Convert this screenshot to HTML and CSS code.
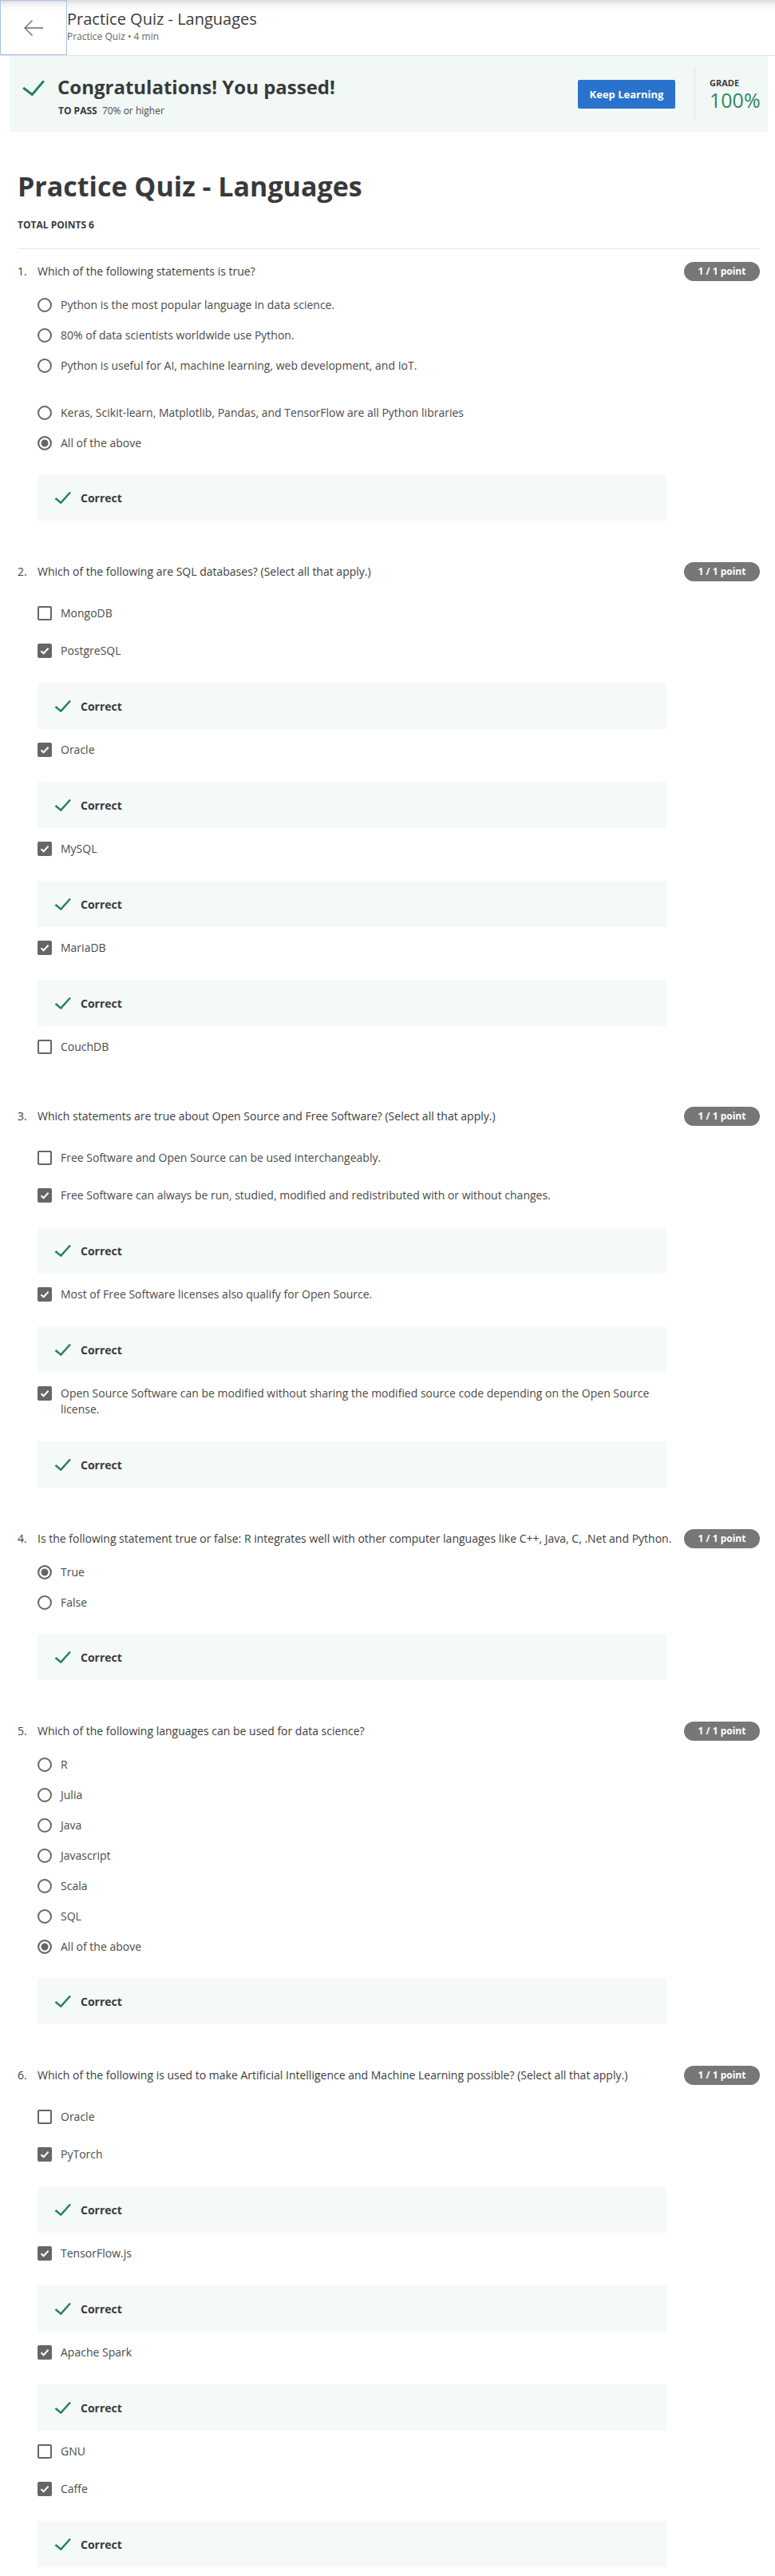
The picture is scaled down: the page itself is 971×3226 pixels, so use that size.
FILE: index.html
```html
<!DOCTYPE html>
<html lang="en">
<head>
<meta charset="utf-8">
<title>Practice Quiz - Languages</title>
<link rel="stylesheet" href="styles.css">
</head>
<body>
<svg class="defs" width="0" height="0" aria-hidden="true">
  <symbol id="ok" viewBox="0 0 21 16"><path d="M1.5 9 L8.3 14.6 L20 1.5" fill="none" stroke="#1f8354" stroke-width="2.4"/></symbol>
  <symbol id="tick" viewBox="0 0 14 14"><path d="M2.5 7.2 L5.6 10.2 L11.6 3.8" fill="none" stroke="#fff" stroke-width="2"/></symbol>
</svg>

<header class="topbar">
  <button class="back" aria-label="Back">
    <svg width="26" height="22" viewBox="0 0 26 22"><path d="M25 11H2 M11.5 1.5 L2 11 L11.5 20.5" fill="none" stroke="#6b6b6b" stroke-width="1.4"/></svg>
  </button>
  <div class="topbar-text">
    <div class="topbar-title">Practice Quiz - Languages</div>
    <div class="topbar-sub">Practice Quiz • 4 min</div>
  </div>
</header>

<section class="banner">
  <div class="banner-main">
    <svg class="banner-icon" width="28" height="20" viewBox="0 0 28 20"><path d="M1.2 10 L12.3 18.4 L26.8 1.4" fill="none" stroke="#1f8354" stroke-width="3"/></svg>
    <div>
      <div class="banner-title">Congratulations! You passed!</div>
      <div class="banner-sub"><b>TO PASS</b>&nbsp; 70% or higher</div>
    </div>
  </div>
  <div class="banner-actions">
    <button class="btn">Keep Learning</button>
    <div class="vdiv"></div>
    <div class="grade">
      <div class="grade-label">GRADE</div>
      <div class="grade-value">100%</div>
    </div>
  </div>
</section>

<main class="quiz">
  <h1>Practice Quiz - Languages</h1>
  <div class="total">TOTAL POINTS 6</div>

  <div class="q q-first">
    <div class="q-head"><span class="q-num">1.</span><span class="q-text">Which of the following statements is true?</span><span class="badge">1 / 1 point</span></div>
    <div class="options radios">
      <div class="opt"><span class="mark rmark"></span><span>Python is the most popular language in data science.</span></div>
      <div class="opt"><span class="mark rmark"></span><span>80% of data scientists worldwide use Python.</span></div>
      <div class="opt spaced"><span class="mark rmark"></span><span>Python is useful for AI, machine learning, web development, and IoT.</span></div>
      <div class="opt"><span class="mark rmark"></span><span>Keras, Scikit-learn, Matplotlib, Pandas, and TensorFlow are all Python libraries</span></div>
      <div class="opt"><span class="mark rmark on"></span><span>All of the above</span></div>
      <div class="feedback"><svg class="fb-icon"><use href="#ok"/></svg><span>Correct</span></div>
    </div>
  </div>

  <div class="q">
    <div class="q-head"><span class="q-num">2.</span><span class="q-text">Which of the following are SQL databases? (Select all that apply.)</span><span class="badge">1 / 1 point</span></div>
    <div class="options checks">
      <div class="opt"><span class="mark cmark"></span><span>MongoDB</span></div>
      <div class="opt"><span class="mark cmark on"><svg><use href="#tick"/></svg></span><span>PostgreSQL</span></div>
      <div class="feedback"><svg class="fb-icon"><use href="#ok"/></svg><span>Correct</span></div>
      <div class="opt"><span class="mark cmark on"><svg><use href="#tick"/></svg></span><span>Oracle</span></div>
      <div class="feedback"><svg class="fb-icon"><use href="#ok"/></svg><span>Correct</span></div>
      <div class="opt"><span class="mark cmark on"><svg><use href="#tick"/></svg></span><span>MySQL</span></div>
      <div class="feedback"><svg class="fb-icon"><use href="#ok"/></svg><span>Correct</span></div>
      <div class="opt"><span class="mark cmark on"><svg><use href="#tick"/></svg></span><span>MariaDB</span></div>
      <div class="feedback"><svg class="fb-icon"><use href="#ok"/></svg><span>Correct</span></div>
      <div class="opt"><span class="mark cmark"></span><span>CouchDB</span></div>
    </div>
  </div>

  <div class="q">
    <div class="q-head"><span class="q-num">3.</span><span class="q-text">Which statements are true about Open Source and Free Software? (Select all that apply.)</span><span class="badge">1 / 1 point</span></div>
    <div class="options checks">
      <div class="opt"><span class="mark cmark"></span><span>Free Software and Open Source can be used interchangeably.</span></div>
      <div class="opt"><span class="mark cmark on"><svg><use href="#tick"/></svg></span><span>Free Software can always be run, studied, modified and redistributed with or without changes.</span></div>
      <div class="feedback"><svg class="fb-icon"><use href="#ok"/></svg><span>Correct</span></div>
      <div class="opt"><span class="mark cmark on"><svg><use href="#tick"/></svg></span><span>Most of Free Software licenses also qualify for Open Source.</span></div>
      <div class="feedback"><svg class="fb-icon"><use href="#ok"/></svg><span>Correct</span></div>
      <div class="opt"><span class="mark cmark on"><svg><use href="#tick"/></svg></span><span>Open Source Software can be modified without sharing the modified source code depending on the Open Source license.</span></div>
      <div class="feedback"><svg class="fb-icon"><use href="#ok"/></svg><span>Correct</span></div>
    </div>
  </div>

  <div class="q">
    <div class="q-head"><span class="q-num">4.</span><span class="q-text">Is the following statement true or false: R integrates well with other computer languages like C++, Java, C, .Net and Python.</span><span class="badge">1 / 1 point</span></div>
    <div class="options radios">
      <div class="opt"><span class="mark rmark on"></span><span>True</span></div>
      <div class="opt"><span class="mark rmark"></span><span>False</span></div>
      <div class="feedback"><svg class="fb-icon"><use href="#ok"/></svg><span>Correct</span></div>
    </div>
  </div>

  <div class="q">
    <div class="q-head"><span class="q-num">5.</span><span class="q-text">Which of the following languages can be used for data science?</span><span class="badge">1 / 1 point</span></div>
    <div class="options radios">
      <div class="opt"><span class="mark rmark"></span><span>R</span></div>
      <div class="opt"><span class="mark rmark"></span><span>Julia</span></div>
      <div class="opt"><span class="mark rmark"></span><span>Java</span></div>
      <div class="opt"><span class="mark rmark"></span><span>Javascript</span></div>
      <div class="opt"><span class="mark rmark"></span><span>Scala</span></div>
      <div class="opt"><span class="mark rmark"></span><span>SQL</span></div>
      <div class="opt"><span class="mark rmark on"></span><span>All of the above</span></div>
      <div class="feedback"><svg class="fb-icon"><use href="#ok"/></svg><span>Correct</span></div>
    </div>
  </div>

  <div class="q">
    <div class="q-head"><span class="q-num">6.</span><span class="q-text">Which of the following is used to make Artificial Intelligence and Machine Learning possible? (Select all that apply.)</span><span class="badge">1 / 1 point</span></div>
    <div class="options checks">
      <div class="opt"><span class="mark cmark"></span><span>Oracle</span></div>
      <div class="opt"><span class="mark cmark on"><svg><use href="#tick"/></svg></span><span>PyTorch</span></div>
      <div class="feedback"><svg class="fb-icon"><use href="#ok"/></svg><span>Correct</span></div>
      <div class="opt"><span class="mark cmark on"><svg><use href="#tick"/></svg></span><span>TensorFlow.js</span></div>
      <div class="feedback"><svg class="fb-icon"><use href="#ok"/></svg><span>Correct</span></div>
      <div class="opt"><span class="mark cmark on"><svg><use href="#tick"/></svg></span><span>Apache Spark</span></div>
      <div class="feedback"><svg class="fb-icon"><use href="#ok"/></svg><span>Correct</span></div>
      <div class="opt"><span class="mark cmark"></span><span>GNU</span></div>
      <div class="opt"><span class="mark cmark on"><svg><use href="#tick"/></svg></span><span>Caffe</span></div>
      <div class="feedback"><svg class="fb-icon"><use href="#ok"/></svg><span>Correct</span></div>
    </div>
  </div>
</main>
</body>
</html>
```

FILE: styles.css
```css
* { box-sizing: border-box; }

body {
  margin: 0;
  font-family: "Open Sans", "Liberation Sans", sans-serif;
  color: #373a3c;
  background: #fff;
}

.defs { display: block; width: 0; height: 0; overflow: hidden; }

/* Top bar */
.topbar {
  display: flex;
  height: 70px;
  border-bottom: 1px solid #e1e1e1;
  background: linear-gradient(#dcdcdc 0, #f4f4f4 6px, #ffffff 14px);
}
.back {
  flex: none;
  width: 84px;
  height: 69px;
  margin: 0;
  padding: 0;
  border: 1px solid #a9c3e3;
  background: transparent;
  display: flex;
  align-items: center;
  justify-content: center;
}
.topbar-text { padding-top: 11px; }
.topbar-title {
  font-size: 20px;
  line-height: 26px;
  color: #3b3b3b;
}
.topbar-sub {
  margin-top: 1px;
  font-size: 12px;
  line-height: 16px;
  color: #666;
}

/* Banner */
.banner {
  margin: 0 9px 0 12px;
  height: 95px;
  padding: 0 13px 0 16px;
  background: #f2f8f6;
  display: flex;
  align-items: center;
  justify-content: space-between;
}
.banner-main {
  display: flex;
  align-items: flex-start;
  padding-top: 4px;
}
.banner-icon { flex: none; margin: 7px 16px 0 0; }
.banner-title {
  font-size: 24px;
  line-height: 32px;
  font-weight: 700;
  color: #373a3c;
}
.banner-sub {
  margin-top: 6px;
  padding-left: 1px;
  font-size: 12px;
  line-height: 16px;
  color: #4a4a4a;
}
.banner-sub b { color: #373a3c; }

.banner-actions { display: flex; align-items: center; }
.btn {
  width: 122px;
  height: 36px;
  border: 0;
  border-radius: 2px;
  background: #2a73cc;
  color: #fff;
  font-family: inherit;
  font-size: 13px;
  font-weight: 700;
}
.vdiv {
  width: 1px;
  height: 68px;
  margin: 0 18px 0 24px;
  background: #e2e6e5;
}
.grade { width: 60px; }
.grade-label {
  font-size: 11px;
  line-height: 14px;
  font-weight: 700;
  color: #3c3c3c;
}
.grade-value {
  font-size: 25px;
  line-height: 28px;
  color: #2a8a5c;
}

/* Quiz */
.quiz { margin: 0 19px 0 22px; padding-bottom: 10px; }
h1 {
  margin: 48px 0 0;
  font-size: 34px;
  line-height: 40px;
  font-weight: 700;
  color: #373a3c;
}
.total {
  margin-top: 21px;
  padding-bottom: 21px;
  border-bottom: 1px solid #e6e6e6;
  font-size: 12px;
  line-height: 16px;
  font-weight: 700;
  color: #373a3c;
}
.q { margin-top: 54px; }
.q.q-first { margin-top: 18px; }

.q-head {
  display: flex;
  align-items: center;
  font-size: 14px;
  line-height: 20px;
  color: #3d3d3d;
}
.q-num { flex: none; width: 25px; }
.q-text { flex: 1; }
.badge {
  flex: none;
  margin: -2px 0 -2px 10px;
  width: 95px;
  height: 24px;
  border-radius: 12px;
  background: #777;
  color: #fff;
  font-size: 12px;
  font-weight: 700;
  display: flex;
  align-items: center;
  justify-content: center;
}

.options { width: 788px; margin: 13px 0 0 25px; }
.options.checks { margin-top: 18px; }

.opt {
  display: flex;
  align-items: flex-start;
  font-size: 14px;
  line-height: 20px;
  color: #4a4a4a;
}
.radios .opt { padding: 9px 0; }
.checks .opt { padding: 14px 0 13px; }
.opt.spaced { margin-bottom: 21px; }

.mark {
  flex: none;
  width: 18px;
  height: 18px;
  margin: 1px 11px 0 0;
  border: 2px solid #666;
}
.rmark { border-radius: 50%; }
.rmark.on {
  background: #666;
  box-shadow: inset 0 0 0 2.5px #fff;
}
.cmark { border-radius: 2px; }
.cmark.on {
  background: #666;
  display: flex;
  align-items: center;
  justify-content: center;
}
.cmark svg { width: 14px; height: 14px; }

.feedback {
  height: 58px;
  margin: 17px 0 2px;
  padding-left: 21px;
  background: #f5f9f8;
  display: flex;
  align-items: center;
  font-size: 14px;
  font-weight: 700;
  color: #373a3c;
}
.radios .feedback { margin-top: 20px; }
.fb-icon { flex: none; width: 21px; height: 16px; margin-right: 12px; }
```
